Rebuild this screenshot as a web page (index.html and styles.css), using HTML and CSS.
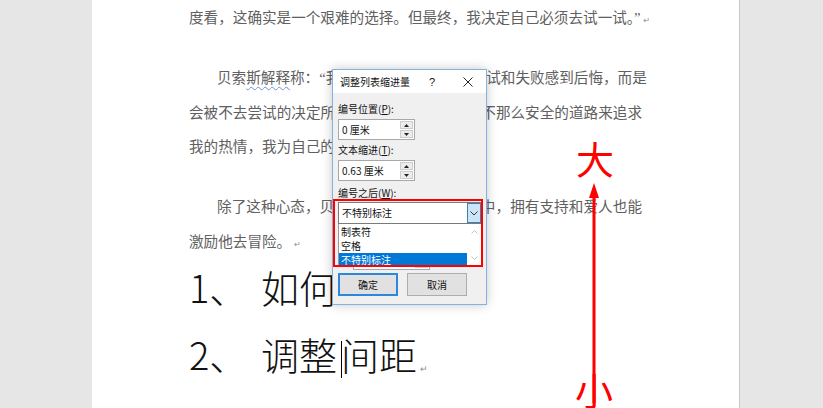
FILE: index.html
```html
<!DOCTYPE html>
<html lang="zh-CN">
<head>
<meta charset="utf-8">
<link rel="stylesheet" href="styles.css">
</head>
<body>
<div class="workspace">
  <div class="page">
    <p class="para">
      <span class="ln last">度看，这确实是一个艰难的选择。但最终，我决定自己必须去试一试。<span class="q">”</span><span class="pm">↵</span></span>
    </p>
    <p class="para">
      <span class="ln indent">贝索<span class="squiggle">斯解释</span>称：<span class="q">“</span>我知道自己绝不会因为尝试和失败感到后悔，而是</span>
      <span class="ln">会被不去尝试的决定所困扰。因此我选择这条不那么安全的道路来追求</span>
      <span class="ln last">我的热情，我为自己的选择感到自豪。<span class="q">”</span><span class="pm">↵</span></span>
    </p>
    <p class="para">
      <span class="ln indent">除了这种心态，贝索斯还认为在创业过程中，拥有支持和爱人也能</span>
      <span class="ln last">激励他去冒险。<span class="pm">↵</span></span>
    </p>
    <div class="headings">
      <h2 class="heading"><span class="num">1、</span>如何<span class="pm big">↵</span></h2>
      <h2 class="heading"><span class="num">2、</span>调整<span class="caret"></span>间距<span class="pm big">↵</span></h2>
      <h2 class="heading tail"><span class="num">3、</span>设置缩进值<span class="pm big">↵</span></h2>
    </div>
  </div>

  <div class="dialog">
    <div class="titlebar">
      <span class="title">调整列表缩进量</span>
      <span class="help">?</span>
      <span class="close">
        <svg width="10" height="10" viewBox="0 0 10 10"><path d="M0.5 0.5 L9.5 9.5 M9.5 0.5 L0.5 9.5" stroke="#222" stroke-width="1" fill="none"/></svg>
      </span>
    </div>
    <div class="dbody">
      <div class="lbl">编号位置(<u>P</u>):</div>
      <div class="spin">
        <span class="val">0 厘米</span>
        <span class="sbtns">
          <span class="sbtn"><svg width="5" height="3" viewBox="0 0 5 3"><path d="M0 3 L2.5 0 L5 3 Z" fill="#222"/></svg></span>
          <span class="sbtn"><svg width="5" height="3" viewBox="0 0 5 3"><path d="M0 0 L5 0 L2.5 3 Z" fill="#222"/></svg></span>
        </span>
      </div>
      <div class="lbl l2">文本缩进(<u>T</u>):</div>
      <div class="spin">
        <span class="val">0.63 厘米</span>
        <span class="sbtns">
          <span class="sbtn"><svg width="5" height="3" viewBox="0 0 5 3"><path d="M0 3 L2.5 0 L5 3 Z" fill="#222"/></svg></span>
          <span class="sbtn"><svg width="5" height="3" viewBox="0 0 5 3"><path d="M0 0 L5 0 L2.5 3 Z" fill="#222"/></svg></span>
        </span>
      </div>
      <div class="lbl l3">编号之后(<u>W</u>):</div>
      <div class="combo">
        <span class="val">不特别标注</span>
        <span class="drop"><svg width="8" height="5" viewBox="0 0 8 5"><path d="M0.5 0.5 L4 4 L7.5 0.5" stroke="#333" stroke-width="1" fill="none"/></svg></span>
      </div>
      <div class="tabrow"><span class="chk"></span>制表位添加位置(<u>B</u>):</div>
      <div class="spin tabspin">
        <span class="val">1.27 厘米</span>
        <span class="sbtns">
          <span class="sbtn"></span>
          <span class="sbtn"></span>
        </span>
      </div>
      <div class="btnrow">
        <span class="btn primary">确定</span>
        <span class="btn">取消</span>
      </div>
    </div>

    <div class="listpop">
      <div class="items">
        <div class="item">制表符</div>
        <div class="item">空格</div>
        <div class="item sel">不特别标注</div>
      </div>
      <div class="scroll">
        <svg width="7" height="4" viewBox="0 0 7 4"><path d="M0.5 3.5 L3.5 0.5 L6.5 3.5" stroke="#c4c4c4" stroke-width="1" fill="none"/></svg>
        <svg width="7" height="4" viewBox="0 0 7 4"><path d="M0.5 0.5 L3.5 3.5 L6.5 0.5" stroke="#c4c4c4" stroke-width="1" fill="none"/></svg>
      </div>
    </div>
    <div class="redbox"></div>
  </div>

  <div class="mark big-mark">大</div>
  <svg class="arrow" width="16" height="222" viewBox="0 0 16 222">
    <path d="M8 0 L13 15 L3 15 Z" fill="#ff0000"/>
    <rect x="6.5" y="12" width="3" height="208" fill="#ff0000"/>
  </svg>
  <div class="mark small-mark">小</div>
</div>
</body>
</html>
```
FILE: styles.css
```css
html, body {
  margin: 0;
  padding: 0;
}
body {
  width: 823px;
  height: 408px;
  overflow: hidden;
  background: #e6e6e6;
}
.workspace {
  position: relative;
  width: 823px;
  height: 408px;
  overflow: hidden;
}
.page {
  margin-left: 92px;
  width: 648px;
  height: 408px;
  box-sizing: border-box;
  background: #fff;
  border-right: 1px solid #c9c9c9;
  padding: 0 0 0 97px;
  font-family: "Noto Sans CJK SC", sans-serif;
  color: #606060;
}
.para {
  margin: 0 0 25.5px 0;
  width: 453px;
  font-size: 14.6px;
  line-height: 34.5px;
}
.ln {
  display: block;
  height: 34.5px;
  text-align: justify;
  text-align-last: justify;
  white-space: nowrap;
}
.ln.last {
  text-align-last: left;
}
.ln.indent {
  padding-left: 28px;
}
.q {
  font-family: "Liberation Serif", serif;
  line-height: 0;
}
.squiggle {
  text-decoration: underline wavy #6d8fd6;
  text-decoration-thickness: 1px;
  text-underline-offset: 3px;
}
.pm {
  font-family: "DejaVu Sans", sans-serif;
  font-size: 8px;
  line-height: 0;
  color: #8a8a8a;
  margin-left: 3px;
}
.pm.big {
  font-size: 9px;
  vertical-align: -2px;
}
.headings {
  margin-top: -31px;
}
.heading {
  margin: 0;
  height: 67px;
  font-family: "Noto Sans CJK SC", sans-serif;
  font-weight: 300;
  font-size: 38px;
  line-height: 67px;
  color: #111;
  white-space: nowrap;
}
.heading.tail {
  margin-top: 6px;
}
.num {
  display: inline-block;
  width: 72px;
}
.caret {
  display: inline-block;
  width: 1px;
  height: 37px;
  background: #000;
  vertical-align: -8px;
  margin: 0 -1px 0 4px;
}

/* dialog */
.dialog {
  position: absolute;
  left: 332px;
  top: 69px;
  width: 155px;
  height: 236px;
  box-sizing: border-box;
  border: 1px solid #84b2e0;
  background: #f0f0f0;
  box-shadow: 0 0 10px rgba(0, 0, 0, 0.22);
  font-family: "Noto Sans CJK SC", sans-serif;
  font-size: 10px;
  color: #111;
}
.titlebar {
  height: 23px;
  background: #fff;
  display: flex;
  align-items: center;
  padding-left: 7px;
}
.title {
  flex: 1;
  font-size: 10px;
}
.help {
  width: 20px;
  text-align: center;
  font-family: "Liberation Sans", sans-serif;
  font-size: 11px;
  margin-right: 14px;
}
.close {
  width: 24px;
  margin-right: 6px;
  display: flex;
  justify-content: center;
  align-items: center;
}
.dbody {
  padding: 7px 4px 0 5px;
}
.lbl {
  height: 17px;
  line-height: 17px;
}
.lbl.l2 {
  margin-top: 1px;
}
.lbl.l3 {
  margin-top: 3px;
}
.spin {
  display: flex;
  width: 77px;
  height: 21px;
  margin-top: 2px;
  box-sizing: border-box;
  border: 1px solid #a8a8a8;
  background: #fff;
}
.spin .val {
  flex: 1;
  padding-left: 3px;
  line-height: 19px;
}
.sbtns {
  width: 13px;
  display: flex;
  flex-direction: column;
  padding: 1px 1px 1px 0;
  gap: 1px;
}
.sbtn {
  flex: 1;
  background: #ececec;
  border: 1px solid #cdcdcd;
  display: flex;
  justify-content: center;
  align-items: center;
}
.combo {
  display: flex;
  margin-top: 1px;
  height: 22px;
  box-sizing: border-box;
  border: 1px solid #7a7a7a;
  background: #fff;
}
.combo .val {
  flex: 1;
  padding-left: 3px;
  line-height: 20px;
}
.drop {
  width: 14px;
  box-sizing: border-box;
  background: #cce4f7;
  border: 1px solid #3c7fb1;
  display: flex;
  justify-content: center;
  align-items: center;
}
.tabrow {
  height: 17px;
  line-height: 17px;
  margin-top: 3px;
  display: flex;
  align-items: center;
  gap: 4px;
}
.chk {
  width: 9px;
  height: 9px;
  border: 1px solid #333;
  background: #fff;
}
.tabspin {
  margin-left: 15px;
  margin-top: 5px;
}
.btnrow {
  display: flex;
  gap: 9px;
  margin-top: 3px;
}
.btn {
  width: 60px;
  height: 23px;
  box-sizing: border-box;
  border: 1px solid #adadad;
  background: #e1e1e1;
  display: flex;
  justify-content: center;
  align-items: center;
}
.btn.primary {
  border: 2px solid #2f87dc;
}
.listpop {
  position: absolute;
  left: 5px;
  top: 154px;
  width: 144px;
  height: 42px;
  box-sizing: border-box;
  border: 1px solid #9a9a9a;
  border-top: none;
  background: #fff;
  display: flex;
}
.items {
  flex: 1;
  padding-top: 1px;
}
.item {
  height: 14px;
  line-height: 14px;
  padding-left: 2px;
}
.item.sel {
  height: 13px;
  line-height: 13px;
  background: #0078d7;
  color: #fff;
}
.scroll {
  width: 14px;
  display: flex;
  flex-direction: column;
  justify-content: space-between;
  align-items: center;
  padding: 6px 0 5px;
  box-sizing: border-box;
}
.redbox {
  position: absolute;
  left: 0;
  top: 129px;
  width: 150px;
  height: 68px;
  box-sizing: border-box;
  border: 2px solid #ff0000;
}

/* annotations */
.mark {
  position: absolute;
  font-family: "Noto Sans CJK SC", sans-serif;
  font-size: 38px;
  line-height: 38px;
  color: #ff0000;
  width: 40px;
  text-align: center;
}
.big-mark {
  left: 575px;
  top: 139px;
}
.small-mark {
  left: 574px;
  top: 370px;
}
.arrow {
  position: absolute;
  left: 586px;
  top: 183px;
}
```
